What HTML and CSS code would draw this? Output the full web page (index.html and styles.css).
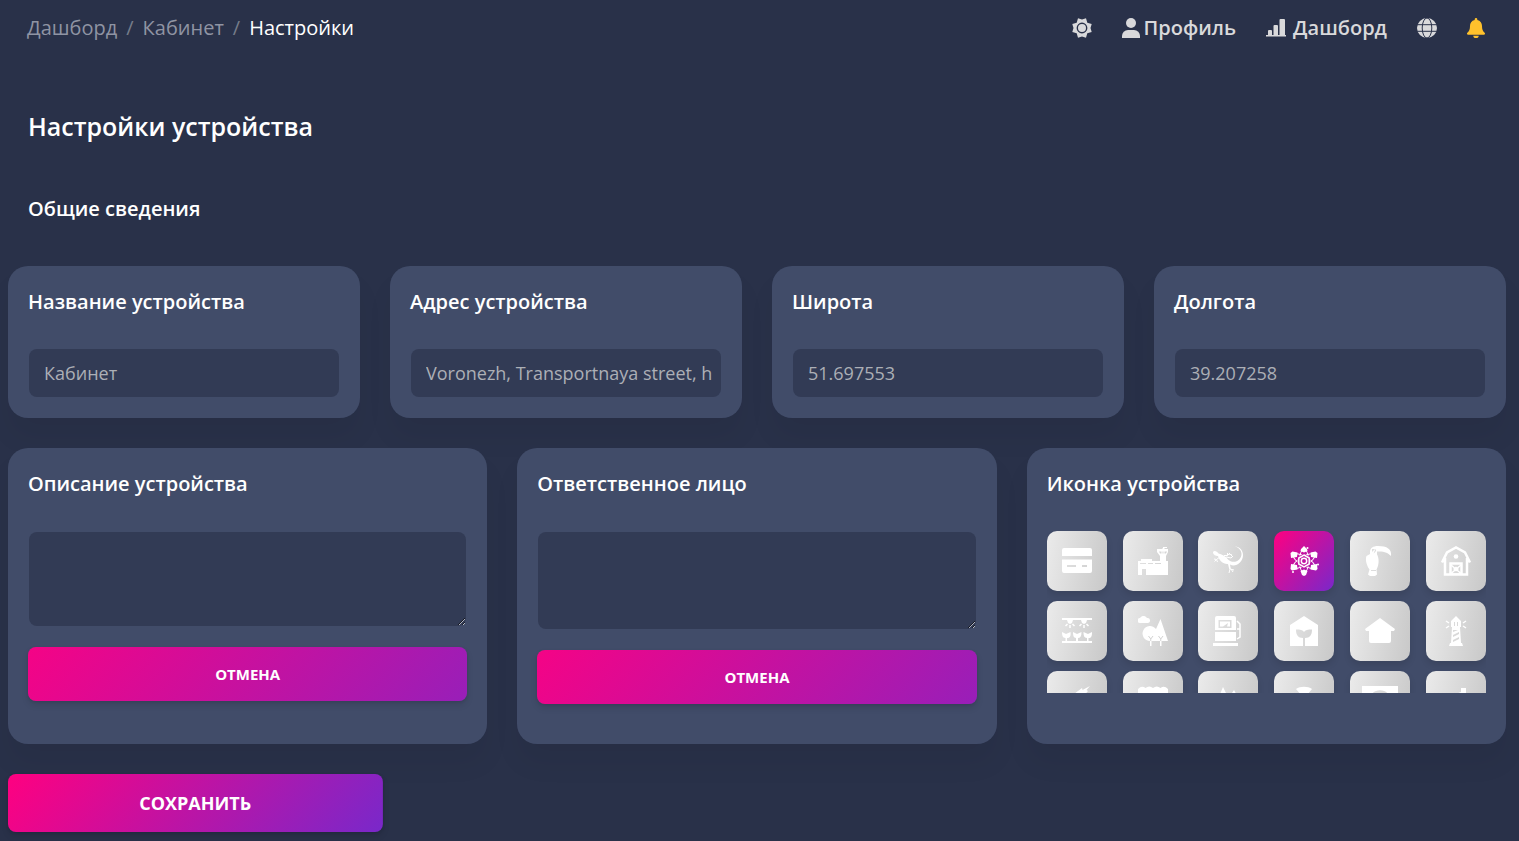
FILE: index.html
```html
<!DOCTYPE html>
<html lang="ru">
<head>
<meta charset="utf-8">
<title>Настройки устройства</title>
<link rel="stylesheet" href="styles.css">
</head>
<body>
<header class="topbar">
  <nav class="crumbs" aria-label="Навигация">
    <a class="crumb" href="#">Дашборд</a><span class="sep">/</span><a class="crumb" href="#">Кабинет</a><span class="sep">/</span><span class="current">Настройки</span>
  </nav>
  <nav class="menu" aria-label="Меню">
    <button class="menu-item theme" type="button" aria-label="Тема">
      <svg class="ico" viewBox="0 0 20 20"><path fill="currentColor" fill-rule="evenodd" d="M6 0.300L10 1.500 14 0.300 15.300 4.700 19.700 6 18.500 10 19.700 14 15.300 15.300 14 19.700 10 18.500 6 19.700 4.700 15.300 0.300 14 1.500 10 0.300 6 4.700 4.700ZM10 4.600a5.400 5.400 0 1 0 0 10.800a5.400 5.400 0 1 0 0-10.800ZM10 6a4 4 0 1 1 0 8a4 4 0 1 1 0-8Z"/></svg>
    </button>
    <a class="menu-item profile" href="#">
      <svg class="ico ico-narrow" viewBox="0 0 18 20"><circle cx="9" cy="5" r="5" fill="currentColor"/><path fill="currentColor" d="M0 20v-2a6 6 0 0 1 6-6h6a6 6 0 0 1 6 6v2z"/></svg>
      <span>Профиль</span>
    </a>
    <a class="menu-item dash" href="#">
      <svg class="ico" viewBox="0 0 20 20"><path fill="currentColor" d="M2 17v-4a1 1 0 0 1 1-1h2a1 1 0 0 1 1 1v4h1.500V8a1 1 0 0 1 1-1h2.500a1 1 0 0 1 1 1v9h1.500V2a1 1 0 0 1 1-1h3.500a1 1 0 0 1 1 1v15h1.500v1.500H0V17z"/></svg>
      <span>Дашборд</span>
    </a>
    <button class="menu-item globe" type="button" aria-label="Язык">
      <svg class="ico" viewBox="0 0 20 20"><circle cx="10" cy="10" r="10" fill="currentColor"/><g class="cut"><ellipse cx="10" cy="10" rx="4.800" ry="10"/><path d="M0 6.700h20M0 13.300h20"/></g></svg>
    </button>
    <button class="menu-item bell" type="button" aria-label="Уведомления">
      <svg class="ico ico-narrow" viewBox="0 0 18 20"><path fill="currentColor" d="M9 0a1.300 1.300 0 0 1 1.300 1.300v.6C13.500 2.500 15 5 15 8c0 3.500.8 5 2.600 6.800.9 1 .3 1.900-.8 1.900H1.200C.1 16.700-.5 15.800.4 14.800 2.200 13 3 11.500 3 8c0-3 1.500-5.500 4.700-6.100v-.6A1.300 1.300 0 0 1 9 0zM6.300 17.700h5.400a2.700 2.300 0 0 1-5.400 0z"/></svg>
    </button>
  </nav>
</header>
<main class="page">
  <h1 class="title">Настройки устройства</h1>
  <h2 class="subtitle">Общие сведения</h2>
  <form class="form">
    <div class="row row-four">
      <section class="card"><label class="label" for="name">Название устройства</label><input class="field" id="name" type="text" placeholder="Кабинет"></section>
      <section class="card"><label class="label" for="addr">Адрес устройства</label><input class="field" id="addr" type="text" placeholder="Voronezh, Transportnaya street, h. 1"></section>
      <section class="card"><label class="label" for="lat">Широта</label><input class="field" id="lat" type="text" placeholder="51.697553"></section>
      <section class="card"><label class="label" for="lon">Долгота</label><input class="field" id="lon" type="text" placeholder="39.207258"></section>
    </div>
    <div class="row row-three">
      <section class="card"><label class="label" for="desc">Описание устройства</label><textarea class="field area" id="desc"></textarea><button class="btn" type="reset">ОТМЕНА</button></section>
      <section class="card"><label class="label" for="resp">Ответственное лицо</label><textarea class="field area area-tall" id="resp"></textarea><button class="btn" type="reset">ОТМЕНА</button></section>
      <section class="card">
        <h3 class="label">Иконка устройства</h3>
        <div class="icons">
          <button class="tile" type="button" aria-label="Карта"><svg viewBox="0 0 30 30"><path fill-rule="evenodd" d="M2 2h26a2 2 0 0 1 2 2v6H0V4a2 2 0 0 1 2-2zM0 13.500h30V25a2 2 0 0 1-2 2H2a2 2 0 0 1-2-2zM5 19v2h9v-2zM20 19v2h5v-2z"/></svg></button>
          <button class="tile" type="button" aria-label="Аэропорт"><svg viewBox="0 0 30 30"><path fill-rule="evenodd" d="M0 15h3v-2h11v2h8V10l-3-4V3h5.500V2H25V1h4v1h-2.500v1H30v3l-2 4v5h2v14H8v-6H4v6H0zM2 17v1h6v-1zM10 17v1h5v-1zM17 17v1h6v-1zM21 5.500l1 2h1.500v-2zM24.500 5.500v2h1v-2zM26.500 5.500v2H28l1-2z"/></svg></button>
          <button class="tile" type="button" aria-label="Ящерица"><svg viewBox="0 0 30 30"><path d="M0 6c1-2 4-1 5.500 1.500 3 .5 7 2.500 10 6.500 6 4.500 13 0 13-6C28.500 4 25 1 21.500.5 26 0 30 4 30 9c0 8-8 12.500-13 9.500l.8 4.500-1.600 0-1.200-5C10 18.500 6 14 5 10 3 10 0 9 0 6z"/><path class="line" d="M7 11l-3.500 2.500 1 2.500M3.500 13.500L1 13M3.500 13.500l-2 2M11 9.500l3.500 0 0-2.500M14.500 9.500l1.500-1.500 3 1M13 11l5 1 2-2M17 23l4 1M18 23l2 3M17 23l-1 4M16 7l3 3"/></svg></button>
          <button class="tile active" type="button" aria-label="Атом" aria-pressed="true"><svg viewBox="0 0 30 30"><g class="line"><ellipse cx="15" cy="15" rx="4.500" ry="12"/><ellipse cx="15" cy="15" rx="4.500" ry="12" transform="rotate(60 15 15)"/><ellipse cx="15" cy="15" rx="4.500" ry="12" transform="rotate(120 15 15)"/></g><path id="petal" d="M15 6.500l-3.500-1.500.5-2L15 0l3 3 .5 2zM15 23.500l-3.500 1.500L13 29l2 1 2-1 1.500-4zM8 11l-6 1-.5-5 2-1.500L8.500 6.500zM22 11l6 1 .5-5-2-1.500-5 1zM8 19l-6-1-.5 5 1.500 1.500 5.500-1zM22 19l6-1 .5 5-1.500 1.500-5.500-1z"/><circle cx="18.500" cy="2" r="1"/><circle cx="4" cy="26" r="1"/><circle cx="29" cy="18.500" r="1"/><path class="core" d="M15 7.500l6.500 3.700v7.600L15 22.500l-6.500-3.700v-7.600z"/><g class="line thick"><path d="M15 9l5.200 3v6L15 21l-5.200-3v-6z"/><circle cx="15" cy="15" r="2.700"/></g></svg></button>
          <button class="tile" type="button" aria-label="Тукан"><svg viewBox="0 0 30 30"><path fill-rule="evenodd" d="M5 6c0-4 3-6 8-6 9 0 14 3 13 10-4-4-8-4.500-14-4.500v3c2 3 2.500 10-.5 15l.5 5-2 1.500H5l-2-1.500 1.500-5C.5 18 .5 12 1.500 10L5 8zM7 3v3l3-3zM10.500 3l-2 4.500c3-2.500 3-3.500 2-4.500zM6 24v1h5v-1z"/></svg></button>
          <button class="tile" type="button" aria-label="Амбар"><svg viewBox="0 0 30 30"><path class="line heavy" d="M1 16.500L6 6.500l9-5 9 5 5 10M4 12v16.500h22V12"/><circle cx="15" cy="10.500" r="2.300"/><path class="line heavy" d="M9.500 29V17.500h11V29"/><path class="line thick" d="M10 19l10 8.500M20 19l-10 8.500M10 28h10"/><path d="M15 20.500l3 2.500-3 2.500-3-2.500z"/></svg></button>
          <button class="tile" type="button" aria-label="Теплица"><svg viewBox="0 0 30 30"><path d="M0 2h30v2H0zM0 25h30v2H0zM5 4h6l-1 3-2 1-2-1zM19 4h6l-1 3-2 1-2-1zM0 16l4 2 4.500-2c.5 4-.5 6-3.500 6v4H3.500v-4C.5 22 0 19 0 16zM11 16l4 2 4.500-2c0 4-1 6-3.500 6v4h-2v-4c-2.500 0-3-3-3-6zM21.500 16l4.500 2 4-2c0 4-.5 6-3.500 6v4H25v-4c-3 0-3.500-3-3.500-6z"/><path class="line thick" d="M5.500 8l-2 2M8 9v3M10.500 8l2 2M19.500 8l-2 2M22 9v3M24.500 8l2 2"/></svg></button>
          <button class="tile" type="button" aria-label="Парк"><svg viewBox="0 0 30 30"><path d="M2 7a2.500 2.500 0 0 1 0-5a4 4 0 0 1 7 0a2.500 2.500 0 0 1 1 5zM22.500 3L30 25h-6.500v5H22v-5h-8.500v5H12v-5A7.500 7.500 0 1 1 18 13z"/><path class="mark" d="M10.500 20l2.250 3 2.250-3M12.750 23v2M20.500 20l2.250 3 2.250-3M22.750 23v2"/></svg></button>
          <button class="tile" type="button" aria-label="Заправка"><svg viewBox="0 0 30 30"><path fill-rule="evenodd" d="M2 2a2 2 0 0 1 2-2h17a2 2 0 0 1 2 2v12H2zM5.500 4v8h13V4zM2 16h21v9H2zM0 27h25v3H0z"/><path d="M7 5.500h10v5h-3L15 7l-5 3.500H7z"/><path class="line thick" d="M24 5l3 3v13l-3 2M24 13h3"/></svg></button>
          <button class="tile" type="button" aria-label="Эко-дом"><svg viewBox="0 0 30 30"><path fill-rule="evenodd" d="M15 0l14 9v21H16v-8c5 0 7-3 7-8.500-4 0-7 .5-8 2.500-1-2-4-2.500-8-2.500C7 19 9 22 14 22v8H1V9z"/></svg></button>
          <button class="tile" type="button" aria-label="Дом"><svg viewBox="0 0 30 30"><path d="M15 2l15 11-1 2h-3v10a2 2 0 0 1-2 2H6a2 2 0 0 1-2-2V15H1l-1-2z"/></svg></button>
          <button class="tile" type="button" aria-label="Маяк"><svg viewBox="0 0 30 30"><path fill-rule="evenodd" d="M15 0l5 5v6h-1l1 16h1l1 3H8l1-3h1l1-16h-1V5zM13 6v4h1V6zM16 6v4h1V6zM12 14v2l5-2zM12 19v2l6-3v-2zM12 24v2l6-3v-2z"/><path class="line thick" d="M8 7L5 5M8 10l-3 2M22 7l3-2M22 10l3 2"/></svg></button>
          <button class="tile" type="button" aria-label="Ракета"><svg viewBox="0 0 30 30"><path d="M28 0l-3.500 4 1.500 1-8 9-6-6 8-6 .5 2z"/></svg></button>
          <button class="tile" type="button" aria-label="Магазин"><svg viewBox="0 0 30 30"><path d="M0 3q3.750-4 7.500-1 3.750-3 7.500 0 3.750-3 7.500 0 3.750-3 7.500 1v25H0z"/></svg></button>
          <button class="tile" type="button" aria-label="Лес"><svg viewBox="0 0 30 30"><path d="M10 1l6 12H5zM21 4l5 9H15z"/></svg></button>
          <button class="tile" type="button" aria-label="Радио"><svg viewBox="0 0 30 30"><path d="M7 3c4-3 12-3 16 0l-5 6h-6z"/></svg></button>
          <button class="tile" type="button" aria-label="Стадион"><svg viewBox="0 0 36 30"><path fill-rule="evenodd" d="M0 0h36v30H0zM10 8c3-5 13-5 16 0v8H10z"/></svg></button>
          <button class="tile" type="button" aria-label="Завод"><svg viewBox="0 0 30 30"><path d="M20 2h5v27H3V12l17-6z"/></svg></button>
        </div>
      </section>
    </div>
    <button class="btn save" type="submit">СОХРАНИТЬ</button>
  </form>
</main>
</body>
</html>
```
FILE: styles.css
```css
* { box-sizing: border-box; }
body {
  margin: 0;
  background: #293149;
  color: #fff;
  font-family: "Open Sans", "Noto Sans", sans-serif;
  font-size: 20px;
  line-height: 32px;
}
button, input, textarea { font: inherit; color: inherit; border: 0; }
button { cursor: pointer; padding: 0; }
a { color: inherit; text-decoration: none; }

.topbar {
  display: flex;
  justify-content: space-between;
  align-items: center;
  height: 56px;
  padding: 0 34px 0 27px;
}
.crumbs { display: flex; gap: 9px; }
.crumb { color: #8f94a3; }
.sep { color: #757c89; }
.menu { display: flex; align-items: center; gap: 30px; color: #d9d9db; font-weight: 600; }
.menu-item { display: flex; align-items: center; gap: 4px; background: none; }
.dash { gap: 7px; }
.ico { display: block; width: 20px; height: 20px; }
.ico-narrow { width: 18px; }
.cut { fill: none; stroke: #293149; stroke-width: 1; }
.bell { color: #ffc12c; }

.page { padding: 0 13px 9px 8px; }
.title { margin: 54px 20px 0; font-size: 25px; font-weight: 600; }
.subtitle { margin: 51px 20px 41px; font-size: 20px; font-weight: 600; }
.form { display: flex; flex-direction: column; gap: 30px; }
.row { display: grid; gap: 30px; }
.row-four { grid-template-columns: repeat(4, minmax(0, 1fr)); }
.row-three { grid-template-columns: repeat(3, minmax(0, 1fr)); }
.card {
  padding: 20px;
  border-radius: 20px;
  background: #414c69;
  box-shadow: 0 20px 27px rgba(0, 0, 0, 0.05);
}
.row-three .card { padding-bottom: 40px; }
.label { display: block; margin: 0 0 31px; font-size: 20px; font-weight: 600; }
.field {
  display: block;
  width: calc(100% - 2px);
  height: 48px;
  margin: 0 1px 1px;
  padding: 0 8px 0 15px;
  border-radius: 8px;
  background: #323b55;
  font-size: 18px;
  outline: 0;
}
.field::placeholder { color: #acafb6; opacity: 1; }
.area { height: 94px; margin-top: 32px; margin-bottom: 21px; padding: 8px 15px; resize: vertical; }
.area-tall { height: 97px; }

.btn {
  display: block;
  width: 100%;
  height: 54px;
  border-radius: 8px;
  background: linear-gradient(310deg, #7928ca, #ff0080) 25% 0 / 150% 100%;
  box-shadow: 0 4px 7px rgba(0, 0, 0, 0.11), 0 1px 3px rgba(0, 0, 0, 0.08);
  color: #fff;
  font-size: 15px;
  font-weight: 700;
}
.save { width: 25%; height: 58px; background-size: 100% 100%; font-size: 18px; }

.icons {
  display: grid;
  grid-template-columns: repeat(6, 60px);
  justify-content: space-between;
  row-gap: 10px;
  height: 162px;
  overflow: hidden;
}
.tile {
  display: grid;
  place-items: center;
  height: 60px;
  border-radius: 10px;
  background: linear-gradient(100deg, #ebebeb, #c8c8c8);
  box-shadow: 0 4px 7px rgba(0, 0, 0, 0.11);
}
.tile.active { background: linear-gradient(310deg, #7928ca, #ff0080); }
.tile svg { display: block; height: 30px; fill: #fff; }
.tile .line { fill: none; stroke: #fff; stroke-width: 1; }
.tile .thick { stroke-width: 1.5; }
.tile .heavy { stroke-width: 2.5; }
.tile .mark { fill: none; stroke: #d2d2d2; stroke-width: 1; }
.tile .core { fill: #bf13a2; }
```
